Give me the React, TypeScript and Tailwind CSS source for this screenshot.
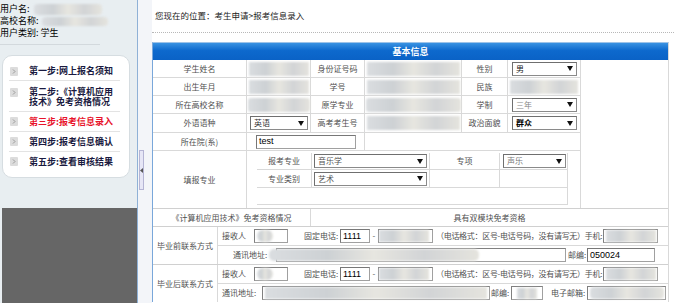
import React from 'react';

const CJK = "font-['Noto_Sans_CJK_SC',sans-serif]";
const td = 'border-r border-b border-[#d9d9d9] p-0 align-middle';
const L = 'border-r border-b border-[#d9d9d9] p-0 align-middle text-center text-[8px] text-[#505050] whitespace-nowrap';
const L6 = 'border-r border-[#d9d9d9] p-0 align-middle text-center text-[8px] text-[#505050]';
const txt = 'text-[8px] text-[#505050] whitespace-nowrap';

function Blur({ className }: { className: string }) {
  return (
    <div
      className={`blur-[1.2px] bg-[linear-gradient(90deg,#dadde0_0%,#cdd1d4_28%,#e7e6e0_50%,#d2d4d6_74%,#e5e4de_100%)] ${className}`}
    />
  );
}

function Sel({ v, className, tone }: { v: string; className: string; tone: string }) {
  return (
    <div
      className={`h-[14px] border border-[#8a8a8a] border-t-[#6f6f6f] border-l-[#6f6f6f] bg-white flex items-center justify-between px-[3px] ${className}`}
    >
      <span className={`text-[8px] leading-none ${tone}`}>{v}</span>
      <svg width="6" height="5" viewBox="0 0 6 5">
        <path d="M0 0H6L3 5Z" fill="#111" />
      </svg>
    </div>
  );
}

function Inp({ v, className }: { v: string; className: string }) {
  return (
    <div
      className={`h-[14px] border border-[#a0a0a0] border-t-[#777] border-l-[#777] bg-white flex items-center px-[2px] text-[9px] leading-none text-black font-['Liberation_Sans',Arial,sans-serif] ${className}`}
    >
      {v}
    </div>
  );
}

function Box({ className, children }: { className: string; children?: React.ReactNode }) {
  return (
    <div className={`h-[14px] border border-[#a0a0a0] border-t-[#808080] border-l-[#808080] bg-white flex items-center overflow-visible ${className}`}>
      {children}
    </div>
  );
}

function MenuIcon() {
  return (
    <svg width="8" height="9" viewBox="0 0 8 9" className="shrink-0">
      <rect x="0" y="0" width="8" height="9" rx="1" fill="#dcdcdc" />
      <path d="M3 2.5L5 4.5L3 6.5" stroke="#9a9a9a" strokeWidth="1" fill="none" />
    </svg>
  );
}

const steps = [
  { t: '第一步:网上报名须知', h: 'h-[19px]', red: false },
  { t: '第二步:《计算机应用技术》免考资格情况', h: 'h-[31px]', red: false },
  { t: '第三步:报考信息录入', h: 'h-[20px]', red: true },
  { t: '第四步:报考信息确认', h: 'h-[20px]', red: false },
  { t: '第五步:查看审核结果', h: 'h-[19px]', red: false },
];

function ContactTop() {
  return (
    <div className="h-[19px] border-b border-[#d9d9d9] flex items-center pl-[4px]">
      <span className={`${txt} w-[24px]`}>接收人</span>
      <Box className="ml-[8px] w-[34px]">
        <Blur className="ml-[2px] w-[16px] h-[12px] rounded-full" />
      </Box>
      <span className={`${txt} ml-[16px] w-[36px]`}>固定电话:</span>
      <Inp v="1111" className="w-[30px]" />
      <span className={`${txt} w-[8px] text-center`}>-</span>
      <Box className="w-[55px]">
        <Blur className="w-[50px] h-[12px]" />
      </Box>
      <span className={`${txt} ml-[3px] w-[166px] tracking-[-0.3px]`}>（电话格式：区号-电话号码，没有请写无）手机:</span>
      <Box className="ml-[1px] w-[55px]">
        <Blur className="ml-[2px] w-[50px] h-[12px]" />
      </Box>
    </div>
  );
}

export default function App() {
  return (
    <div className={`w-[674px] h-[303px] overflow-hidden flex bg-white ${CJK}`}>
      {/* left panel */}
      <div className="w-[138px] shrink-0 flex flex-col border-r border-[#8fb1d6]">
        <div className="h-[208px] bg-[#e8eef1] pt-[3px] overflow-hidden">
          <div className="text-[9px] leading-[12px] text-black">
            <div className="h-[12px] flex items-center whitespace-nowrap">
              用户名:
              <Blur className="ml-[4px] w-[68px] h-[11px] rounded-[4px]" />
            </div>
            <div className="h-[12px] flex items-center whitespace-nowrap">
              高校名称:
              <Blur className="ml-[3px] w-[66px] h-[9px] rounded-[4px]" />
            </div>
            <div className="h-[12px] flex items-center whitespace-nowrap">用户类别: 学生</div>
          </div>
          <div className="mt-[5px] w-[100px] border-t border-[#d3d9dd]" />
          <div className="mt-[10px] ml-[2px] w-[128px] rounded-[10px] border border-[#d6dde1] bg-white pt-[6px] pb-[6px]">
            {steps.map((s, i) => (
              <div
                key={i}
                className={`${s.h} ml-[6px] mr-[9px] flex ${i === 1 ? 'items-start pt-[6px]' : 'items-center'} ${i < 4 ? 'border-b border-[#e3e3e3]' : ''}`}
              >
                <div className={`ml-[1px] ${i === 1 ? 'mt-[1px]' : ''}`}>
                  <MenuIcon />
                </div>
                <span
                  className={`ml-[11px] w-[90px] text-[9px] leading-[10px] font-bold ${s.red ? 'text-[#e8132b]' : 'text-[#1a1a40]'}`}
                >
                  {s.t}
                </span>
              </div>
            ))}
          </div>
        </div>
        <div className="flex-1 bg-[#666] border-l-2 border-[#e8eef1]" />
      </div>

      {/* splitter */}
      <div className="w-[14px] shrink-0 bg-[#f3f5f9]">
        <div className="mt-[150px] ml-[1px] w-[5px] h-[40px] bg-[#e6e6f6] border border-[#b4b4d4] flex items-center justify-center">
          <svg width="3" height="5" viewBox="0 0 3 5">
            <path d="M3 0V5L0 2.5Z" fill="#555" />
          </svg>
        </div>
      </div>

      {/* content */}
      <div className="w-[522px] shrink-0">
        <div className="h-[20px] pt-[10px] pl-[3px] text-[8.5px] leading-[10px] text-[#222] whitespace-nowrap">
          您现在的位置：考生申请&gt;报考信息录入
        </div>
        <div className="mt-[12px] border-t border-dotted border-[#b8b8b8]" />

        <div className="mt-[9px] w-[517px] border-l border-[#79a7da] border-t border-t-[#9ec3e8] border-r border-r-[#d9d9d9]">
          <div className="h-[17px] bg-[linear-gradient(#3a93e2,#0d69cd_45%,#0a62c6)] flex items-center justify-center text-white text-[9px] font-bold">
            基本信息
          </div>

          <div className="flex border-b border-[#d0d0d0]">
            <table className="border-separate border-spacing-0 table-fixed w-[428px]">
              <colgroup>
                <col className="w-[94px]" />
                <col className="w-[64px]" />
                <col className="w-[54px]" />
                <col className="w-[97px]" />
                <col className="w-[46px]" />
                <col className="w-[73px]" />
              </colgroup>
              <tbody>
                <tr className="h-[18px]">
                  <td className={L}>学生姓名</td>
                  <td className={td}><Blur className="ml-[2px] w-[60px] h-[14px]" /></td>
                  <td className={L}>身份证号码</td>
                  <td className={td}><Blur className="ml-[2px] w-[93px] h-[14px]" /></td>
                  <td className={L}>性别</td>
                  <td className={td}><Sel v="男" className="ml-[4px] w-[65px]" tone="text-[#222]" /></td>
                </tr>
                <tr className="h-[18px]">
                  <td className={L}>出生年月</td>
                  <td className={td}><Blur className="ml-[2px] w-[60px] h-[14px]" /></td>
                  <td className={L}>学号</td>
                  <td className={td}><Blur className="ml-[2px] w-[93px] h-[14px]" /></td>
                  <td className={L}>民族</td>
                  <td className={td}><Blur className="ml-[2px] w-[68px] h-[14px]" /></td>
                </tr>
                <tr className="h-[18px]">
                  <td className={L}>所在高校名称</td>
                  <td className={td}><Blur className="ml-[1px] w-[62px] h-[14px] rounded-[3px]" /></td>
                  <td className={L}>原学专业</td>
                  <td className={td}><Blur className="ml-[1px] w-[95px] h-[14px] rounded-[3px]" /></td>
                  <td className={L}>学制</td>
                  <td className={td}><Sel v="三年" className="ml-[4px] w-[65px]" tone="text-[#888]" /></td>
                </tr>
                <tr className="h-[19px]">
                  <td className={L}>外语语种</td>
                  <td className={td}><Sel v="英语" className="ml-[3px] w-[58px]" tone="text-[#333]" /></td>
                  <td className={L}>高考考生号</td>
                  <td className={td}><Blur className="ml-[2px] w-[93px] h-[14px]" /></td>
                  <td className={L}>政治面貌</td>
                  <td className={td}><Sel v="群众" className="ml-[4px] w-[65px]" tone="text-black font-bold" /></td>
                </tr>
                <tr className="h-[18px]">
                  <td className={L}>所在院(系)</td>
                  <td colSpan={2} className={td}><Inp v="test" className="ml-[9px] w-[100px]" /></td>
                  <td colSpan={3} className={td} />
                </tr>
                <tr className="h-[57px]">
                  <td className={L6}>填报专业</td>
                  <td colSpan={5} className="border-r border-[#d9d9d9] p-0 align-top pl-[10px] pt-[2px]">
                    <table className="border-separate border-spacing-0 table-fixed w-[311px]">
                      <colgroup>
                        <col className="w-[55px]" />
                        <col className="w-[118px]" />
                        <col className="w-[70px]" />
                        <col className="w-[68px]" />
                      </colgroup>
                      <tbody>
                        <tr className="h-[17px]">
                          <td className={L}>报考专业</td>
                          <td className={td}><Sel v="音乐学" className="ml-[2px] w-[113px]" tone="text-[#555]" /></td>
                          <td className={L}>专项</td>
                          <td className={td}><Sel v="声乐" className="ml-[3px] w-[63px]" tone="text-[#777]" /></td>
                        </tr>
                        <tr className="h-[18px]">
                          <td className={L}>专业类别</td>
                          <td className={td}><Sel v="艺术" className="ml-[2px] w-[113px]" tone="text-[#555]" /></td>
                          <td className={td} />
                          <td className={td} />
                        </tr>
                        <tr className="h-[17px]">
                          <td colSpan={4} className={td} />
                        </tr>
                      </tbody>
                    </table>
                  </td>
                </tr>
              </tbody>
            </table>
            <div className="flex-1" />
          </div>

          <div className="flex h-[18px] border-b border-[#d0d0d0]">
            <div className={`w-[158px] border-r border-[#d9d9d9] flex items-center justify-center ${txt}`}>
              《计算机应用技术》免考资格情况
            </div>
            <div className={`flex-1 flex items-center justify-center ${txt}`}>具有双模块免考资格</div>
          </div>

          <div className="flex h-[38px] border-b border-[#d0d0d0]">
            <div className={`w-[65px] border-r border-[#d9d9d9] flex items-center justify-center ${txt}`}>毕业前联系方式</div>
            <div className="flex-1 flex flex-col">
              <ContactTop />
              <div className="flex-1 flex items-center pl-[15px]">
                <span className={`${txt} w-[43px]`}>通讯地址:</span>
                <Box className="w-[290px]">
                  <Blur className="ml-[-8px] w-[210px] h-[12px] rounded-[5px]" />
                </Box>
                <span className={`${txt} ml-[2px] w-[18px]`}>邮编:</span>
                <Inp v="050024" className="ml-[1px] w-[68px]" />
              </div>
            </div>
          </div>

          <div className="flex h-[37px]">
            <div className={`w-[65px] border-r border-[#d9d9d9] flex items-center justify-center ${txt}`}>毕业后联系方式</div>
            <div className="flex-1 flex flex-col">
              <ContactTop />
              <div className="flex-1 flex items-center pl-[4px]">
                <span className={`${txt} w-[40px]`}>通讯地址:</span>
                <Box className="w-[228px]">
                  <Blur className="ml-[2px] w-[222px] h-[12px]" />
                </Box>
                <span className={`${txt} ml-[1px] w-[18px]`}>邮编:</span>
                <Box className="ml-[2px] w-[32px]">
                  <Blur className="ml-[5px] w-[20px] h-[11px]" />
                </Box>
                <span className={`${txt} ml-[8px] w-[35px]`}>电子邮箱:</span>
                <Box className="ml-[1px] w-[79px]">
                  <Blur className="ml-[2px] w-[74px] h-[12px] rounded-[4px]" />
                </Box>
              </div>
            </div>
          </div>
        </div>
      </div>
    </div>
  );
}
